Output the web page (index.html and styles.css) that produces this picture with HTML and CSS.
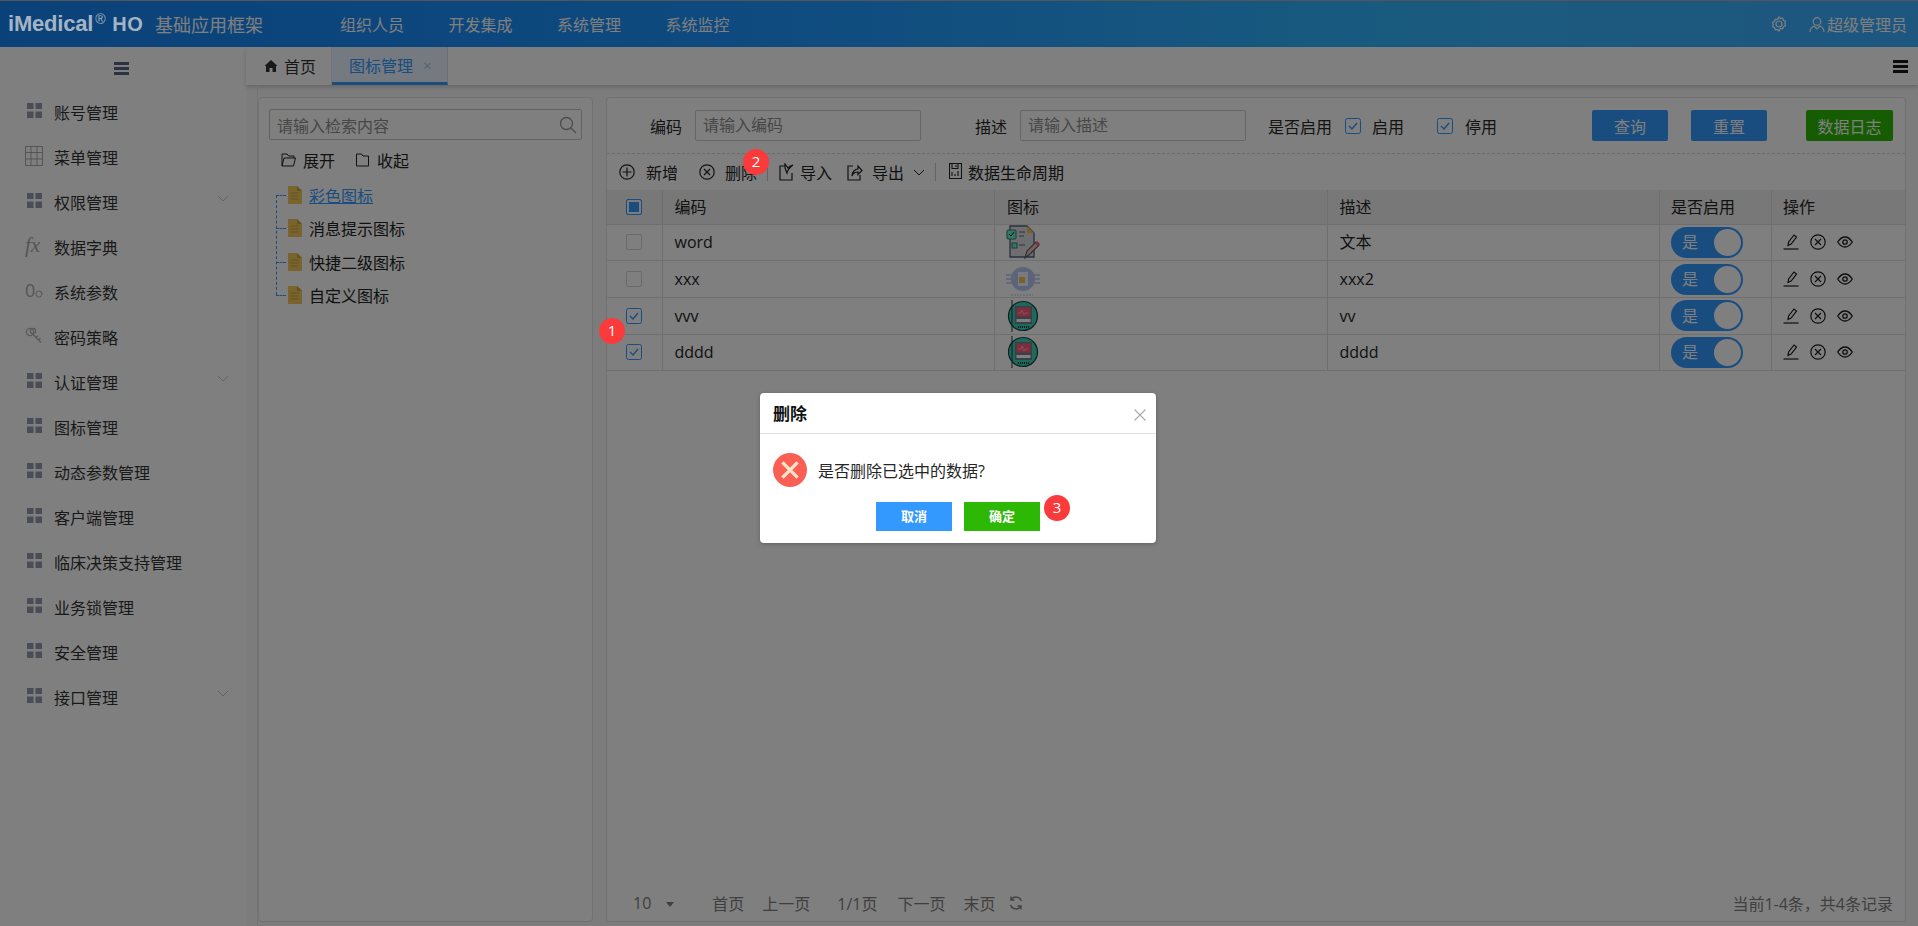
FILE: index.html
```html
<!DOCTYPE html>
<html lang="zh-CN">
<head>
    <meta charset="UTF-8">
    <title>图标管理</title>
    <link rel="stylesheet" href="styles.css">
</head>
<body>
    <svg class="sprite" width="0" height="0">
        <symbol id="i-grid" viewBox="0 0 15 15"><path d="M0 0h6.5v6H0zM8.5 0H15v6H8.5zM0 8.5h6.5V15H0zM8.5 8.5H15V15H8.5z" fill="currentColor"/></symbol>
        <symbol id="i-chev" viewBox="0 0 12 7"><path d="M1 1l5 5 5-5" fill="none" stroke="currentColor"/></symbol>
        <symbol id="i-plus" viewBox="0 0 16 16"><g fill="none" stroke="currentColor" stroke-width="1.2"><circle cx="8" cy="8" r="7.2"/><path d="M8 3.5v9M3.5 8h9"/></g></symbol>
        <symbol id="i-del" viewBox="0 0 16 16"><g fill="none" stroke="currentColor" stroke-width="1.2"><circle cx="8" cy="8" r="7.2"/><path d="M5 5l6 6M11 5l-6 6"/></g></symbol>
        <symbol id="i-edit" viewBox="0 0 16 16"><g fill="none" stroke="currentColor" stroke-width="1.2"><path d="M5 11.500l.6-3.500 5.400-7 2.500 2-5.400 7z"/><path d="M0.500 15h15"/></g></symbol>
        <symbol id="i-eye" viewBox="0 0 16 12"><g fill="none" stroke="currentColor" stroke-width="1.3"><path d="M.7 6C3 2.500 5.500 1 8 1s5 1.500 7.300 5C13 9.500 10.500 11 8 11S3 9.500.7 6z"/><circle cx="8" cy="6" r="2.2"/></g></symbol>
        <symbol id="i-check" viewBox="0 0 16 16"><rect x=".5" y=".5" width="15" height="15" rx="2" fill="none" stroke="#3399ff"/><path d="M4 8l3 3 5-6" fill="none" stroke="#3399ff" stroke-width="1.4"/></symbol>
        <symbol id="i-file" viewBox="0 0 15 18"><path d="M1 0h9l5 5v13H1z" fill="#f0c858"/><path d="M10 0l5 5h-5z" fill="#c9a440"/><path d="M3.500 7h8M3.500 10h8M3.500 13h8" stroke="#c9a440"/></symbol>
        <symbol id="i-monitor" viewBox="0 0 34 34"><circle cx="17" cy="17" r="14.5" fill="#38d6b4" stroke="#203844" stroke-width="1.2"/><path d="M6 1v32" stroke="#203844"/><rect x="9" y="7" width="17" height="18" fill="#748090"/><rect x="10.500" y="8.500" width="14" height="9" fill="#ff5a78"/><path d="M12 14h3l1-3 2 5 1-2h3" fill="none" stroke="#ffd0d8" stroke-width=".6"/><rect x="10.500" y="20" width="14" height="3" fill="#fff"/><path d="M12 28h11" stroke="#203844" stroke-width="2" stroke-dasharray="1 1"/></symbol>
    </svg>

    <header class="topbar">
        <div class="logo">iMedical<sup>®</sup><span class="logo-ho">HO</span></div>
        <div class="app-name">基础应用框架</div>
        <nav class="topnav">
            <a>组织人员</a>
            <a>开发集成</a>
            <a>系统管理</a>
            <a>系统监控</a>
        </nav>
        <div class="top-right">
            <svg class="gear" viewBox="0 0 16 16"><g fill="none" stroke="currentColor" stroke-width="1.2"><path d="M8 1l1.500 1.500 2.200-.3.700 2.100 2 1-.6 2.200.6 2.200-2 1-.7 2.100-2.200-.3L8 15l-1.500-1.500-2.200.3-.7-2.100-2-1 .6-2.200L1.600 6.300l2-1 .7-2.100 2.200.3z"/><circle cx="8" cy="8" r="3"/></g></svg>
            <span class="user">
                <svg viewBox="0 0 16 16"><g fill="none" stroke="currentColor" stroke-width="1.2"><circle cx="8" cy="5" r="3.8"/><path d="M1 15.500c0-3 2-5 4-6l3 3 3-3c2 1 4 3 4 6"/></g></svg>
                超级管理员
            </span>
        </div>
    </header>

    <div class="layout">
        <aside class="sidebar">
            <div class="side-toggle"><span class="burger"></span></div>
            <ul class="menu">
                <li><svg class="m-icon"><use href="#i-grid"/></svg>账号管理</li>
                <li><svg class="m-icon m-table" viewBox="0 0 18 20"><path d="M.5.500h17v19H.5zM.5 6.500h17M.5 13h17M6 .500v19M12 .500v19" fill="none" stroke="currentColor"/></svg>菜单管理</li>
                <li><svg class="m-icon"><use href="#i-grid"/></svg>权限管理<svg class="m-chev"><use href="#i-chev"/></svg></li>
                <li><span class="m-icon m-fx">fx</span>数据字典</li>
                <li><span class="m-icon m-param">0<svg viewBox="0 0 10 10"><circle cx="5" cy="5" r="3.6" fill="none" stroke="currentColor" stroke-width="1.6" stroke-dasharray="2 .6"/></svg></span>系统参数</li>
                <li><svg class="m-icon m-key" viewBox="0 0 18 18"><g fill="none" stroke="currentColor" stroke-width="1.3"><circle cx="5" cy="5" r="3.6"/><circle cx="8" cy="4" r="2.6"/><path d="M8 7.500l8 8M11 10.500l2-2M13.500 13l2-2"/></g></svg>密码策略</li>
                <li><svg class="m-icon"><use href="#i-grid"/></svg>认证管理<svg class="m-chev"><use href="#i-chev"/></svg></li>
                <li><svg class="m-icon"><use href="#i-grid"/></svg>图标管理</li>
                <li><svg class="m-icon"><use href="#i-grid"/></svg>动态参数管理</li>
                <li><svg class="m-icon"><use href="#i-grid"/></svg>客户端管理</li>
                <li><svg class="m-icon"><use href="#i-grid"/></svg>临床决策支持管理</li>
                <li><svg class="m-icon"><use href="#i-grid"/></svg>业务锁管理</li>
                <li><svg class="m-icon"><use href="#i-grid"/></svg>安全管理</li>
                <li><svg class="m-icon"><use href="#i-grid"/></svg>接口管理<svg class="m-chev"><use href="#i-chev"/></svg></li>
            </ul>
        </aside>

        <main class="main">
            <div class="tabs">
                <div class="tab tab-home">
                    <svg viewBox="0 0 14 14"><path d="M7 1L0.500 7H2v6h3.500V9h3v4H12V7h1.500z" fill="currentColor"/></svg>首页
                </div>
                <div class="tab tab-active">图标管理<span class="tab-close">×</span></div>
                <span class="burger burger-right"></span>
            </div>

            <div class="content">
                <section class="panel tree-panel">
                    <div class="search">
                        <span>请输入检索内容</span>
                        <svg viewBox="0 0 18 18"><g fill="none" stroke="#999" stroke-width="1.3"><circle cx="7.500" cy="7.500" r="6"/><path d="M12 12l5 5"/></g></svg>
                    </div>
                    <div class="tree-actions">
                        <span><svg viewBox="0 0 15 14"><path d="M1 13V1h5l1.500 2H13v2M1 13l2-8h11.500l-2 8z" fill="none" stroke="#222"/></svg>展开</span>
                        <span><svg viewBox="0 0 14 14"><path d="M1 13V1h5l1.500 2H13v10z" fill="none" stroke="#222"/></svg>收起</span>
                    </div>
                    <ul class="tree">
                        <li><svg><use href="#i-file"/></svg><a class="tree-link">彩色图标</a></li>
                        <li><svg><use href="#i-file"/></svg>消息提示图标</li>
                        <li><svg><use href="#i-file"/></svg>快捷二级图标</li>
                        <li><svg><use href="#i-file"/></svg>自定义图标</li>
                    </ul>
                </section>

                <section class="panel list-panel">
                    <div class="filter">
                        <label class="f-code">编码</label>
                        <div class="f-input">请输入编码</div>
                        <label class="f-desc">描述</label>
                        <div class="f-input">请输入描述</div>
                        <label class="f-enable">是否启用</label>
                        <svg class="cb f-cb1"><use href="#i-check"/></svg>
                        <span class="f-opt">启用</span>
                        <svg class="cb f-cb2"><use href="#i-check"/></svg>
                        <span class="f-opt2">停用</span>
                        <button class="btn btn-query">查询</button>
                        <button class="btn btn-reset">重置</button>
                        <button class="btn btn-log">数据日志</button>
                    </div>

                    <div class="toolbar">
                        <svg class="t-add"><use href="#i-plus"/></svg><span class="t-add-txt">新增</span>
                        <svg class="t-del"><use href="#i-del"/></svg><span>删除</span>
                        <i class="t-sep t-sep1"></i>
                        <svg class="t-imp" viewBox="0 0 16 18"><path d="M13 10v7H1V3h5M6 1v4l2 5c1-4 3-6 6-8-2 .5-4 1.500-5 3z" fill="none" stroke="currentColor" stroke-width="1.2"/></svg><span>导入</span>
                        <svg class="t-exp" viewBox="0 0 16 18"><path d="M6 3H1v14h12v-5M5 13c0-4 3-7 6-7V3l4 4.500-4 4V9c-3 0-5 1.500-6 4z" fill="none" stroke="currentColor" stroke-width="1.2"/></svg><span>导出</span>
                        <svg class="t-chev"><use href="#i-chev"/></svg>
                        <i class="t-sep t-sep2"></i>
                        <svg class="t-life" viewBox="0 0 13 16"><path d="M.5.500h12v15H.5zM3 .500v5h6v-5M7 2v2M3 9v4M6 11v2M9 8v5" fill="none" stroke="currentColor" stroke-width="1.1"/></svg><span>数据生命周期</span>
                    </div>

                    <table class="grid">
                        <colgroup>
                            <col class="c-check"><col class="c-wide"><col class="c-wide"><col class="c-wide"><col class="c-switch"><col>
                        </colgroup>
                        <thead>
                            <tr>
                                <th><span class="cb-all"></span></th>
                                <th>编码</th>
                                <th>图标</th>
                                <th>描述</th>
                                <th class="col-switch">是否启用</th>
                                <th class="col-ops">操作</th>
                            </tr>
                        </thead>
                        <tbody>
                            <tr>
                                <td><span class="cb-empty"></span></td>
                                <td>word</td>
                                <td class="td-img">
                                    <svg viewBox="0 0 34 34"><path d="M4 1h17l7 7v24H4z" fill="#dcdce0" stroke="#545e84" stroke-width="1.3"/><path d="M21 1l7 7h-7z" fill="#f4c254"/><rect x="1" y="5" width="9" height="9" rx="1" fill="#5ef4c4" stroke="#3a7474"/><path d="M3 9l2 2 3-4" fill="none" stroke="#222"/><path d="M13 7h6M13 11h5M13 20h6" stroke="#545e84" stroke-width="1.2"/><rect x="6" y="18" width="5" height="5" fill="#5ef4c4" stroke="#3a7474"/><path d="M19 33l2-7 9-9 3 3-9 9z" fill="#f4c4a0" stroke="#545e84" stroke-width="1.2"/><path d="M29 18l2-2 3 3-2 2z" fill="#ff5a78"/></svg>
                                </td>
                                <td>文本</td>
                                <td class="col-switch"><span class="switch">是<i></i></span></td>
                                <td class="col-ops"><span class="ops"><svg class="op-edit"><use href="#i-edit"/></svg><svg class="op-del"><use href="#i-del"/></svg><svg class="op-eye"><use href="#i-eye"/></svg></span></td>
                            </tr>
                            <tr>
                                <td><span class="cb-empty"></span></td>
                                <td>xxx</td>
                                <td class="td-img">
                                    <svg viewBox="0 0 34 34"><rect x="0" y="0" width="34" height="34" fill="#fff"/><circle cx="17" cy="17" r="12" fill="#b6c8f0"/><path d="M0 13h8M0 17h6M0 21h8M26 13h8M28 17h6M26 21h8" stroke="#b6c8f0" stroke-width="1.3"/><rect x="12" y="10" width="10" height="14" fill="#f0f4ff"/><rect x="13" y="15" width="6" height="6" fill="#f4c254"/><path d="M5 33h22" stroke="#b6c8f0" stroke-dasharray="2 1"/></svg>
                                </td>
                                <td>xxx2</td>
                                <td class="col-switch"><span class="switch">是<i></i></span></td>
                                <td class="col-ops"><span class="ops"><svg class="op-edit"><use href="#i-edit"/></svg><svg class="op-del"><use href="#i-del"/></svg><svg class="op-eye"><use href="#i-eye"/></svg></span></td>
                            </tr>
                            <tr>
                                <td><svg class="cb"><use href="#i-check"/></svg></td>
                                <td>vvv</td>
                                <td class="td-img"><svg><use href="#i-monitor"/></svg></td>
                                <td>vv</td>
                                <td class="col-switch"><span class="switch">是<i></i></span></td>
                                <td class="col-ops"><span class="ops"><svg class="op-edit"><use href="#i-edit"/></svg><svg class="op-del"><use href="#i-del"/></svg><svg class="op-eye"><use href="#i-eye"/></svg></span></td>
                            </tr>
                            <tr>
                                <td><svg class="cb"><use href="#i-check"/></svg></td>
                                <td>dddd</td>
                                <td class="td-img"><svg><use href="#i-monitor"/></svg></td>
                                <td>dddd</td>
                                <td class="col-switch"><span class="switch">是<i></i></span></td>
                                <td class="col-ops"><span class="ops"><svg class="op-edit"><use href="#i-edit"/></svg><svg class="op-del"><use href="#i-del"/></svg><svg class="op-eye"><use href="#i-eye"/></svg></span></td>
                            </tr>
                        </tbody>
                    </table>

                    <div class="pager">
                        <span class="p-size">10</span><i class="p-caret"></i>
                        <span class="p-first">首页</span>
                        <span class="p-prev">上一页</span>
                        <span class="p-num">1/1页</span>
                        <span class="p-next">下一页</span>
                        <span class="p-last">末页</span>
                        <svg class="p-refresh" viewBox="0 0 14 14"><g fill="none" stroke="#7e7e7e" stroke-width="1.3"><path d="M12.500 5A6 6 0 0 0 2 3.500M1.500 9A6 6 0 0 0 12 10.500"/><path d="M2 .5v3.500h3.500M12 13.500V10H8.500"/></g></svg>
                        <span class="p-total">当前1-4条，共4条记录</span>
                    </div>
                </section>
            </div>
        </main>
    </div>

    <div class="overlay"></div>

    <span class="mark mark-1">1</span>
    <span class="mark mark-2">2</span>

    <div class="dialog">
        <div class="dialog-head">
            <span>删除</span>
            <svg viewBox="0 0 12 12"><path d="M.5.500l11 11M11.500.500l-11 11" stroke="#a9a9a9" stroke-width="1.1"/></svg>
        </div>
        <div class="dialog-body">
            <span class="err-icon"><svg viewBox="0 0 16 16"><path d="M2.500 2.500l11 11M13.500 2.500l-11 11" stroke="#fbe5c8" stroke-width="2.4"/></svg></span>
            <span>是否删除已选中的数据?</span>
        </div>
        <div class="dialog-foot">
            <button class="d-btn d-cancel">取消</button>
            <button class="d-btn d-ok">确定</button>
            <span class="mark mark-3">3</span>
        </div>
    </div>
</body>
</html>
```

FILE: styles.css
```css
* {
    box-sizing: border-box;
}
html, body {
    margin: 0;
    height: 926px;
    overflow: hidden;
}
body {
    font-family: "Open Sans", "Noto Sans CJK SC", sans-serif;
    font-size: 16px;
    color: #282828;
    background: #f8f8f8;
    display: flex;
    flex-direction: column;
    position: relative;
}
ul {
    list-style: none;
    margin: 0;
    padding: 0;
}
svg {
    display: block;
    flex: none;
}
.sprite {
    position: absolute;
}

/* top bar */
.topbar {
    height: 47px;
    flex: none;
    display: flex;
    align-items: center;
    border-top: 1px solid #aaa;
    color: #fff;
    background: linear-gradient(90deg, #1483f2 0%, #1e96ff 40%, #30b4ff 70%, #3ab4ff 80%, #3aacff 100%);
    padding-left: 8px;
}
.logo {
    width: 147px;
    font-family: "Liberation Sans", sans-serif;
    font-weight: 700;
    font-size: 22px;
    letter-spacing: -.2px;
    color: #a4b4c4;
    white-space: nowrap;
    position: relative;
    z-index: 20;
}
.logo sup {
    font-size: 14px;
    font-weight: 400;
    vertical-align: 7px;
    line-height: 0;
    margin: 0 7px 0 2px;
}
.logo-ho {
    font-size: 20px;
    letter-spacing: .5px;
}
.app-name {
    font-size: 18px;
    width: 185px;
    white-space: nowrap;
}
.topnav {
    display: flex;
    gap: 44.500px;
}
.top-right {
    margin-left: auto;
    display: flex;
    align-items: center;
    padding-right: 11px;
}
.gear {
    width: 16px;
    height: 16px;
    margin-right: 22px;
}
.user {
    display: flex;
    align-items: center;
    gap: 2px;
}
.user svg {
    width: 16px;
    height: 17px;
}

.layout {
    flex: 1;
    display: flex;
    min-height: 0;
}

/* left menu */
.sidebar {
    width: 246px;
    flex: none;
    background: #fff;
}
.side-toggle {
    height: 42.500px;
    display: flex;
    align-items: center;
    justify-content: center;
    padding-right: 4px;
}
.burger {
    display: block;
    width: 15px;
    height: 13px;
    border-top: 3px solid #566480;
    border-bottom: 3px solid #566480;
    position: relative;
}
.burger::after {
    content: "";
    position: absolute;
    left: 0;
    right: 0;
    top: 2px;
    height: 3px;
    background: #566480;
}
.menu li {
    height: 45px;
    display: flex;
    align-items: center;
    padding-left: 27px;
    color: #333;
    white-space: nowrap;
}
.m-icon {
    width: 15px;
    height: 15px;
    margin-right: 12px;
    margin-top: -3px;
    color: #949aaa;
}
.m-table {
    width: 18px;
    height: 20px;
    margin-left: -2px;
    margin-right: 11px;
    color: #aaa;
}
.m-fx {
    font-family: "Liberation Serif", serif;
    font-style: italic;
    font-size: 21px;
    line-height: 15px;
    color: #aaa;
    width: 18px;
    margin-left: -2px;
    margin-right: 11px;
}
.m-param {
    display: flex;
    align-items: flex-end;
    width: 18px;
    margin-left: -2px;
    margin-right: 11px;
    font-size: 18px;
    line-height: 15px;
    color: #aaa;
}
.m-param svg {
    width: 8px;
    height: 8px;
}
.m-key {
    width: 18px;
    height: 18px;
    margin-left: -2px;
    margin-right: 11px;
    color: #b4b4b4;
}
.m-chev {
    width: 12px;
    height: 7px;
    margin-left: auto;
    margin-right: 17px;
    margin-top: -7px;
    color: #bcc4d0;
}

/* tabs */
.main {
    flex: 1;
    min-width: 0;
    display: flex;
    flex-direction: column;
}
.tabs {
    height: 38px;
    flex: none;
    display: flex;
    background: #fff;
    box-shadow: 0 2px 4px rgba(0, 0, 0, .18);
    padding-right: 10px;
    align-items: stretch;
}
.tab {
    display: flex;
    align-items: center;
}
.tab-home {
    width: 86px;
    padding-left: 18px;
    color: #333;
    border-right: 1px solid #e8e8e8;
}
.tab-home svg {
    width: 14px;
    height: 14px;
    margin-right: 6px;
}
.tab-active {
    width: 116px;
    padding-left: 17px;
    color: #3399ff;
    background: #e8f4ff;
    border-bottom: 3px solid #3399ff;
    border-right: 1px solid #dcdcdc;
}
.tab-close {
    margin-left: 10px;
    font-size: 15px;
    color: #a8c8e8;
}
.burger-right {
    margin-left: auto;
    align-self: center;
    border-color: #1a1a1a;
}
.burger-right::after {
    background: #1a1a1a;
}

/* panels */
.content {
    flex: 1;
    min-height: 0;
    display: flex;
    gap: 13px;
    padding: 12px 12px 4px 0;
    border-left: 1px solid #e8e8e8;
    margin-left: 11px;
}
.panel {
    background: #fefefe;
    border: 1px solid #e2e2e2;
    border-radius: 4px;
}
.tree-panel {
    width: 335px;
    flex: none;
    padding: 11px 10px;
}
.search {
    height: 31px;
    border: 1px solid #c6c6c6;
    border-radius: 2px;
    display: flex;
    align-items: center;
    justify-content: space-between;
    padding: 0 4px 0 7px;
    color: #8e8e8e;
}
.search svg {
    width: 18px;
    height: 18px;
}
.tree-actions {
    display: flex;
    padding-left: 12px;
    height: 40px;
    color: #222;
    gap: 20px;
    align-items: center;
}
.tree-actions span {
    display: flex;
    align-items: center;
    gap: 7px;
}
.tree-actions svg {
    width: 15px;
    height: 14px;
}
.tree {
    position: relative;
    margin-top: -2px;
    padding-left: 18px;
    color: #222;
}
.tree::before {
    content: "";
    position: absolute;
    left: 7px;
    top: 17px;
    bottom: 17px;
    border-left: 1px dashed #3399ff;
}
.tree li {
    height: 33.500px;
    display: flex;
    align-items: center;
    gap: 7px;
    position: relative;
}
.tree li::before {
    content: "";
    position: absolute;
    left: -11px;
    width: 10px;
    top: 50%;
    border-top: 1px dashed #3399ff;
}
.tree li svg {
    width: 15px;
    height: 18px;
}
.tree-link {
    color: #3399ff;
    text-decoration: underline;
}

.list-panel {
    flex: 1;
    min-width: 0;
    display: flex;
    flex-direction: column;
}
.filter {
    height: 56px;
    flex: none;
    display: flex;
    align-items: center;
    padding: 0 12px 0 43px;
    border-bottom: 1px dashed #d6d6d6;
}
.f-code, .f-desc {
    margin-right: 13px;
}
.f-desc {
    margin-left: 54px;
}
.f-input {
    width: 226px;
    height: 31px;
    border: 1px solid #ccc;
    border-radius: 2px;
    padding-left: 7px;
    line-height: 28px;
    color: #8e8e8e;
}
.f-enable {
    margin-left: 22px;
    margin-right: 13px;
}
.cb {
    width: 16px;
    height: 16px;
}
.f-opt {
    margin-left: 11px;
}
.f-cb2 {
    margin-left: 33px;
}
.f-opt2 {
    margin-left: 12px;
}
.btn {
    height: 31px;
    border: 0;
    border-radius: 2px;
    font: inherit;
    color: #fff;
    background: #3399ff;
    width: 76px;
    padding: 0;
}
.btn-query {
    margin-left: auto;
}
.btn-reset {
    margin-left: 23px;
}
.btn-log {
    margin-left: 39px;
    width: 87px;
    background: #2db806;
}

.toolbar {
    height: 36px;
    flex: none;
    display: flex;
    align-items: center;
    padding-left: 12px;
    color: #222;
}
.toolbar svg {
    width: 16px;
    height: 16px;
}
.toolbar .t-imp, .toolbar .t-exp {
    height: 18px;
}
.t-add {
    margin-right: 11px;
}
.t-del {
    margin-left: 21px;
    margin-right: 10px;
}
.t-sep {
    width: 1px;
    height: 18px;
    background: #c8c8c8;
}
.t-sep1 {
    margin: 0 11px 0 10px;
}
.t-imp {
    margin-right: 5px;
}
.t-exp {
    margin-left: 15px;
    margin-right: 9px;
}
.toolbar .t-chev {
    width: 12px;
    height: 7px;
    margin: 0 10px 0 9px;
    color: #222;
}
.toolbar .t-life {
    width: 13px;
    margin: -2px 6px 0 13px;
}

.grid {
    border-collapse: collapse;
    table-layout: fixed;
    width: 100%;
    flex: none;
}
.c-check {
    width: 55px;
}
.c-wide {
    width: 332.500px;
}
.c-switch {
    width: 112px;
}
.grid th, .grid td {
    font-weight: 400;
    text-align: left;
    padding: 0 0 0 12px;
    border: 1px solid #dedede;
    border-top: 0;
    height: 36.700px;
    line-height: 20px;
    color: #242424;
}
.grid th {
    height: 34px;
    background: #f0f0f0;
}
.grid th:first-child, .grid td:first-child {
    border-left: 0;
    padding-left: 19px;
}
.grid th:last-child, .grid td:last-child {
    border-right: 0;
}
.grid .col-switch, .grid .col-ops {
    padding-left: 11px;
}
.cb-all, .cb-empty {
    display: block;
    width: 16px;
    height: 16px;
    border: 1px solid #3399ff;
    border-radius: 2px;
}
.cb-all {
    background: #3399ff;
    box-shadow: inset 0 0 0 2px #f8f8f8;
}
.cb-empty {
    border-color: #d4d4d4;
}
.td-img svg {
    width: 34px;
    height: 34px;
}
.grid .td-img {
    padding-left: 11px;
    line-height: 0;
}
.switch {
    display: flex;
    align-items: center;
    justify-content: space-between;
    width: 72px;
    height: 31px;
    border-radius: 16px;
    background: #3399ff;
    color: #fff;
    padding: 0 2px 0 11px;
}
.switch i {
    width: 27px;
    height: 27px;
    border-radius: 50%;
    background: #fff;
}
.ops {
    display: flex;
    align-items: center;
    color: #1c1c1c;
}
.ops svg {
    width: 16px;
    height: 16px;
}
.ops .op-edit {
    margin-right: 11px;
}
.ops .op-del {
    margin-right: 11px;
}
.ops .op-eye {
    height: 12px;
}

.pager {
    margin-top: auto;
    height: 36px;
    flex: none;
    display: flex;
    align-items: center;
    padding: 0 12px 0 26px;
    color: #7e7e7e;
}
.p-caret {
    width: 0;
    height: 0;
    border: 4px solid transparent;
    border-top: 5px solid #7e7e7e;
    border-bottom: 0;
    margin: 2px 0 0 15px;
}
.p-first {
    margin-left: 38px;
}
.p-prev {
    margin-left: 18px;
}
.p-num {
    margin-left: 27px;
}
.p-next {
    margin-left: 20px;
}
.p-last {
    margin-left: 18px;
}
.p-refresh {
    width: 14px;
    height: 14px;
    margin-left: 13px;
}
.p-total {
    margin-left: auto;
}

/* scrim, annotations and dialog sit above the page */
.overlay {
    position: absolute;
    inset: 0;
    background: rgba(0, 0, 0, .5);
    z-index: 10;
}
.mark {
    position: absolute;
    z-index: 20;
    width: 26px;
    height: 26px;
    border-radius: 50%;
    background: #fb3a3c;
    color: #fff;
    font-size: 15px;
    line-height: 24px;
    text-align: center;
}
.mark-1 {
    left: 599px;
    top: 318px;
}
.mark-2 {
    left: 743px;
    top: 149px;
}
.dialog {
    position: absolute;
    z-index: 20;
    left: 760px;
    top: 393px;
    width: 396px;
    height: 150px;
    background: #fff;
    border-radius: 4px;
    box-shadow: 0 1px 4px rgba(0, 0, 0, .25);
    color: #262626;
}
.dialog-head {
    height: 41px;
    border-bottom: 1px solid #e2e2e2;
    display: flex;
    align-items: center;
    justify-content: space-between;
    padding: 0 10px 2px 13px;
    font-size: 17px;
    font-weight: 700;
    color: #111;
}
.dialog-head svg {
    width: 12px;
    height: 12px;
    margin-top: 6px;
}
.dialog-body {
    display: flex;
    align-items: center;
    gap: 11px;
    padding: 4px 0 0 13px;
    height: 68px;
}
.err-icon {
    width: 34px;
    height: 34px;
    border-radius: 50%;
    background: #fa5f56;
    display: flex;
    align-items: center;
    justify-content: center;
}
.err-icon svg {
    width: 22px;
    height: 22px;
}
.dialog-foot {
    position: relative;
    display: flex;
    justify-content: flex-start;
    gap: 12px;
    padding: 0 0 0 116px;
}
.dialog-foot .mark {
    left: 284px;
    top: -7px;
}
.d-btn {
    width: 76px;
    height: 29px;
    border: 0;
    padding: 0 0 2px;
    font: inherit;
    font-size: 13px;
    font-weight: 700;
    color: #fff;
}
.d-cancel {
    background: #3399ff;
}
.d-ok {
    background: #2db806;
}
```
